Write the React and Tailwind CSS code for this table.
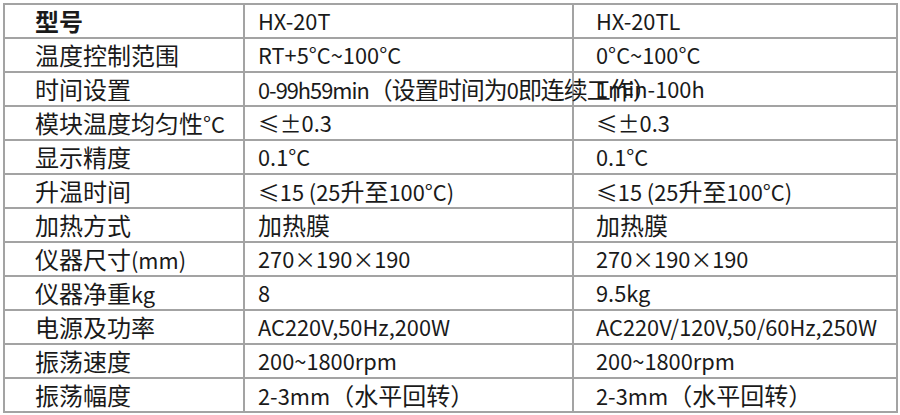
const rows = [
  ['温度控制范围', 'RT+5°C~100°C', '0°C~100°C'],
  ['时间设置', '0-99h59min（设置时间为0即连续工作）', '1min-100h', true],
  ['模块温度均匀性°C', '≤±0.3', '≤±0.3'],
  ['显示精度', '0.1°C', '0.1°C'],
  ['升温时间', '≤15 (25升至100°C)', '≤15 (25升至100°C)'],
  ['加热方式', '加热膜', '加热膜'],
  ['仪器尺寸(mm)', '270×190×190', '270×190×190'],
  ['仪器净重kg', '8', '9.5kg'],
  ['电源及功率', 'AC220V,50Hz,200W', 'AC220V/120V,50/60Hz,250W'],
  ['振荡速度', '200~1800rpm', '200~1800rpm'],
  ['振荡幅度', '2-3mm（水平回转）', '2-3mm（水平回转）'],
]

// CJK glyphs in the source sit a bit larger than the latin text
function Mixed({ text }) {
  const parts = text.split(/([\u3000-\u9fff\uff00-\uffef]+)/)
  return parts.map((p, i) =>
    i % 2 === 1 ? (
      <span key={i} className="text-[24px]">{p}</span>
    ) : (
      <span key={i}>{p}</span>
    )
  )
}

const cell = 'border-2 border-[#a3a3a3] h-[34px] p-0 align-middle whitespace-nowrap overflow-visible'

export default function App() {
  return (
    <div
      className="w-[900px] h-[415px] bg-white pt-[3px] pl-[3px] text-[#1a1a1a]"
      style={{ fontFamily: '"Noto Sans CJK SC", "Noto Sans", sans-serif' }}
    >
      <table className="table-fixed border-collapse w-[893px] text-[21.8px] leading-none">
        <colgroup>
          <col className="w-[240px]" />
          <col className="w-[329px]" />
          <col className="w-[324px]" />
        </colgroup>
        <tbody>
          <tr>
            <td className={`${cell} pl-[30px] font-bold text-[24px]`}>型号</td>
            <td className={`${cell} pl-[13px]`}>HX-20T</td>
            <td className={`${cell} pl-[22px]`}>HX-20TL</td>
          </tr>
          {rows.map((r) => (
            <tr key={r[0]}>
              <td className={`${cell} pl-[30px]`}><Mixed text={r[0]} /></td>
              <td className={`${cell} pl-[13px] ${r[3] ? 'tracking-[-1px]' : ''}`}>
                <Mixed text={r[1]} />
              </td>
              <td className={`${cell} pl-[22px]`}><Mixed text={r[2]} /></td>
            </tr>
          ))}
        </tbody>
      </table>
    </div>
  )
}
